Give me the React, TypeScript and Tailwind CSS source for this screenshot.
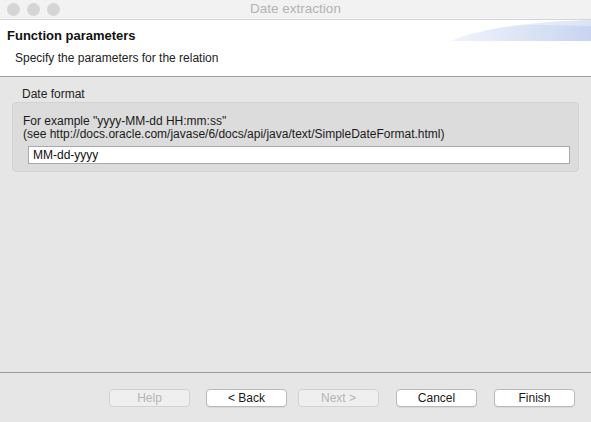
import React from 'react';

const font = { fontFamily: '"Liberation Sans", Arial, sans-serif' };

function Btn({ label, disabled = false }: { label: string; disabled?: boolean }) {
  return (
    <button
      className={
        disabled
          ? 'w-[81px] h-[18px] rounded-[4px] border border-[#d2d2d2] bg-[#efefef] text-[12px] leading-none text-[#b4b4b4]'
          : 'w-[81px] h-[18px] rounded-[4px] border border-[#b9b9b9] bg-white text-[12px] leading-none text-[#1a1a1a] shadow-[0_1px_0_rgba(0,0,0,0.06)]'
      }
    >
      {label}
    </button>
  );
}

export default function App() {
  return (
    <div className="w-[591px] h-[422px] flex flex-col bg-[#e6e6e6] overflow-hidden" style={font}>
      {/* title bar */}
      <div className="relative h-[20px] shrink-0 bg-[#f2f2f2] border-b border-[#d6d6d6] flex items-center">
        <div className="flex gap-[7px] pl-[7px]">
          <span className="block w-[13px] h-[13px] rounded-full bg-[#d5d5d5]" />
          <span className="block w-[13px] h-[13px] rounded-full bg-[#d5d5d5]" />
          <span className="block w-[13px] h-[13px] rounded-full bg-[#d5d5d5]" />
        </div>
        <div className="absolute inset-0 flex items-center justify-center text-[13.5px] text-[#b2b2b2]">
          Date extraction
        </div>
      </div>

      {/* header */}
      <div className="relative h-[57px] shrink-0 bg-white border-b border-[#9f9f9f]">
        <svg className="absolute right-0 top-0" width="140" height="21" viewBox="0 0 140 21">
          <defs>
            <linearGradient id="g" x1="0" y1="0" x2="1" y2="0">
              <stop offset="0" stopColor="#f1f4fb" />
              <stop offset="1" stopColor="#c8d5f1" />
            </linearGradient>
          </defs>
          <path d="M0 21 C 30 8, 80 2, 140 0 L140 21 Z" fill="url(#g)" />
          <path d="M60 6 C 90 4, 115 6, 140 6 L140 0 C 110 1, 85 3, 60 6 Z" fill="#ffffff" opacity="0.35" />
        </svg>
        <div className="pl-[7px] pt-[6px] text-[13px] font-bold text-[#111]">Function parameters</div>
        <div className="pl-[15px] pt-[3px] text-[12px] text-[#222]">Specify the parameters for the relation</div>
      </div>

      {/* body */}
      <div className="flex-1 px-[12px] pt-[11px]">
        <div className="pl-[10px] text-[12px] text-[#222] leading-[13px]">Date format</div>
        <div className="mt-[1px] w-[567px] h-[70px] rounded-[4px] bg-[#dcdcdc] border border-[#d3d3d3] pl-[10px] pt-[12px]">
          <div className="text-[12px] leading-[13px] text-[#1a1a1a]">For example "yyyy-MM-dd HH:mm:ss"</div>
          <div className="text-[12px] leading-[13px] text-[#1a1a1a]">
            (see http://docs.oracle.com/javase/6/docs/api/java/text/SimpleDateFormat.html)
          </div>
          <div className="mt-[5px] ml-[5px] w-[542px] h-[18px] bg-white border border-[#a9a9a9] flex items-center pl-[4px] text-[12px] text-[#111]">
            MM-dd-yyyy
          </div>
        </div>
      </div>

      {/* footer */}
      <div className="h-[50px] shrink-0 border-t border-[#999] flex items-start justify-end pr-[16px] pt-[16px]">
        <div className="flex">
          <Btn label="Help" disabled />
          <div className="w-[16px]" />
          <Btn label="< Back" />
          <div className="w-[11px]" />
          <Btn label="Next >" disabled />
          <div className="w-[17px]" />
          <Btn label="Cancel" />
          <div className="w-[17px]" />
          <Btn label="Finish" />
        </div>
      </div>
    </div>
  );
}
